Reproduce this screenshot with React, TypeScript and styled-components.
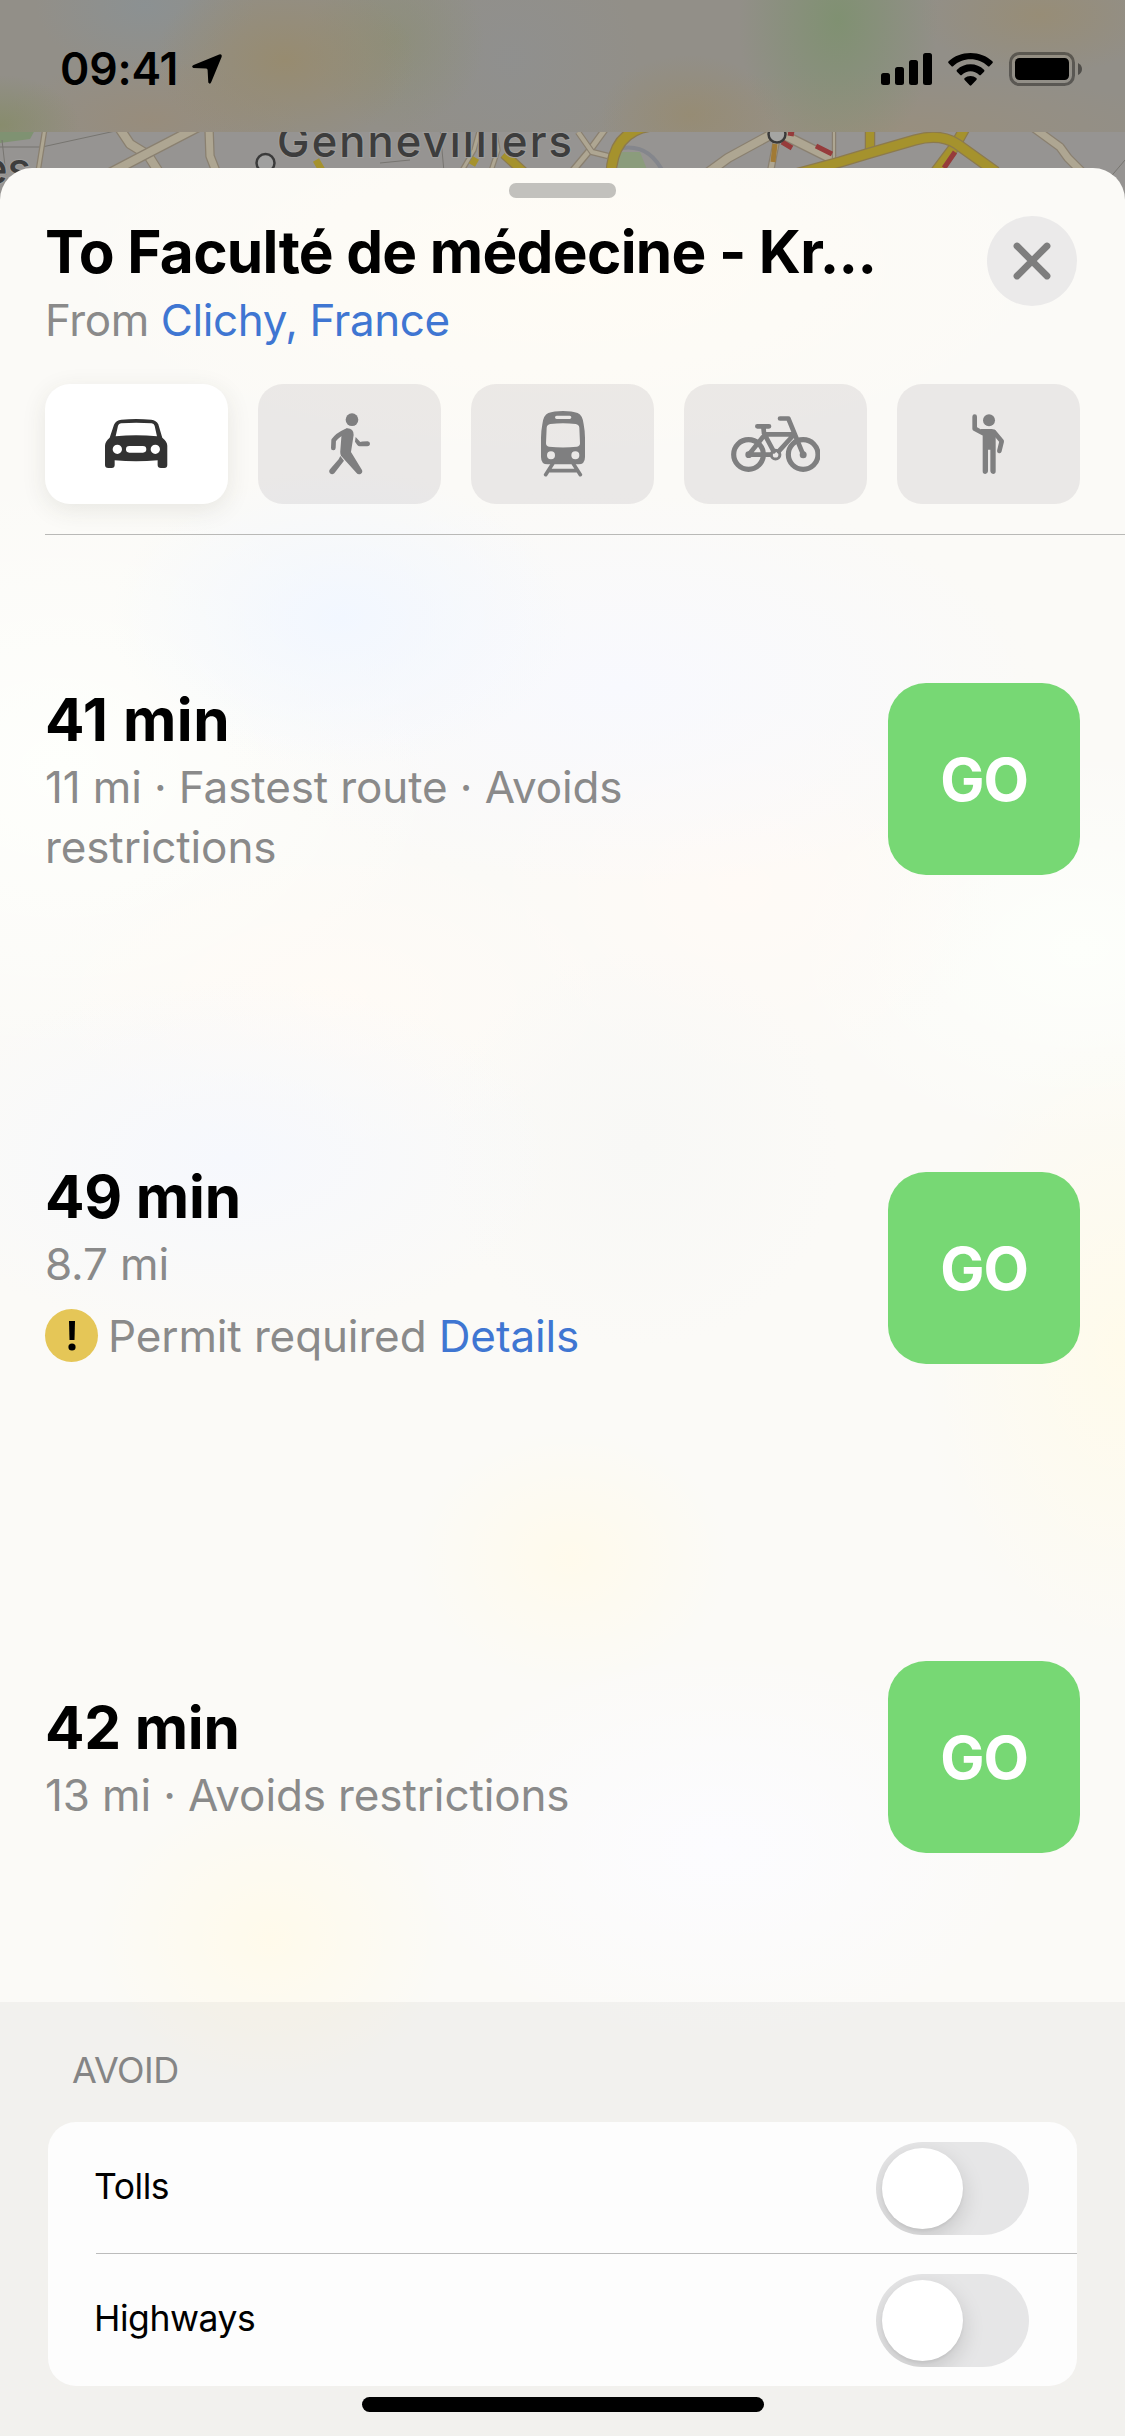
import React, { useState } from "react";
import styled, { createGlobalStyle, css } from "styled-components";

const GlobalStyle = createGlobalStyle`
  * { box-sizing: border-box; }
  html, body { margin: 0; padding: 0; }
  body { font-family: Inter, "Liberation Sans", sans-serif; -webkit-font-smoothing: antialiased; }
  button { font-family: inherit; border: 0; padding: 0; cursor: pointer; }
`;

const Screen = styled.main`
  position: relative;
  width: 1125px;
  height: 2436px;
  overflow: hidden;
  display: flex;
  flex-direction: column;
  background: #969492;
  color: #000;
`;

const MapLayer = styled.svg`
  position: absolute;
  inset: 0 0 auto 0;
  width: 1125px;
  height: 220px;
`;

const StatusBar = styled.header`
  position: relative;
  flex: none;
  height: 132px;
  padding: 6px 43px 0 60px;
  display: flex;
  align-items: center;
  justify-content: space-between;
  background:
    radial-gradient(ellipse 100px 140px at 838px 20px, #7b916ccc, #7b916c00),
    radial-gradient(ellipse 130px 90px at 285px 60px, #998a67bb, #998a6700),
    radial-gradient(ellipse 110px 70px at 145px 5px, #87929999, #87929900),
    radial-gradient(ellipse 80px 50px at 0px 125px, #858b66cc, #858b6600),
    radial-gradient(ellipse 90px 60px at 690px 115px, #978a6caa, #978a6c00),
    radial-gradient(ellipse 120px 60px at 1040px 15px, #998c70bb, #998c7000),
    radial-gradient(ellipse 90px 90px at 395px 40px, #8b8e75aa, #8b8e7500),
    radial-gradient(ellipse 150px 60px at 150px 120px, #998c79cc, #998c7900),
    radial-gradient(ellipse 300px 60px at 880px 130px, #9a8f7ccc, #9a8f7c00),
    radial-gradient(ellipse 130px 130px at 510px 60px, #8f9090cc, #8f909000),
    #928f88;
`;

const StatusGroup = styled.div<{ $gap: number }>`
  display: flex;
  align-items: center;
  gap: ${(p) => p.$gap}px;
`;

const Clock = styled.span`
  font-size: 44.5px;
  line-height: 54px;
  font-weight: 600;
  letter-spacing: -0.2px;
`;

const Icon = styled.svg`
  display: block;
  flex: none;
`;

const Sheet = styled.section`
  position: relative;
  flex: 1;
  margin-top: 36px;
  border-radius: 32px 32px 0 0;
  overflow: hidden;
  display: flex;
  flex-direction: column;
  background:
    radial-gradient(ellipse 230px 150px at 340px 450px, #f2f7ff, #f2f7ff00),
    radial-gradient(ellipse 420px 200px at 620px 520px, #f8f9fe, #f8f9fe00),
    radial-gradient(ellipse 330px 180px at 230px 990px, #f6f8fd, #f6f8fd00),
    radial-gradient(ellipse 200px 200px at 640px 980px, #f8f8f6, #f8f8f600),
    radial-gradient(ellipse 260px 200px at 740px 720px, #fffaf6, #fffaf600),
    radial-gradient(ellipse 300px 160px at 330px 830px, #fffbf6, #fffbf600),
    radial-gradient(ellipse 200px 320px at 1120px 1180px, #fffbeb, #fffbeb00),
    radial-gradient(ellipse 160px 130px at 570px 1390px, #fffaec, #fffaec00),
    radial-gradient(ellipse 180px 150px at 270px 1770px, #fffaeb, #fffaeb00),
    radial-gradient(ellipse 320px 200px at 720px 1680px, #fcfcff, #fcfcff00),
    radial-gradient(ellipse 520px 200px at 560px 100px, #fffcf5, #fffcf500),
    radial-gradient(ellipse 400px 300px at 60px 600px, #fefffc, #fefffc00),
    radial-gradient(ellipse 300px 200px at 1080px 780px, #fdfffb, #fdfffb00),
    #fbfaf7;
`;

const Grabber = styled.div`
  align-self: center;
  flex: none;
  width: 107px;
  height: 15px;
  margin-top: 15px;
  border-radius: 7px;
  background: #c2c1bd;
`;

const SheetHeader = styled.div`
  height: 186px;
  padding: 18px 48px 0 45px;
  display: flex;
  justify-content: space-between;
  align-items: flex-start;
`;

const Heading = styled.div`
  white-space: nowrap;
`;

const Title = styled.h1`
  margin: 0;
  font-size: 58.5px;
  line-height: 72px;
  font-weight: 700;
  letter-spacing: -0.68px;
`;

const Muted = styled.p`
  margin: 0;
  font-size: 44px;
  line-height: 60px;
  letter-spacing: -0.12px;
  color: #8a8a8a;
`;

const Origin = styled(Muted)`
  margin-top: 2px;
  letter-spacing: -0.4px;
`;

const Link = styled.a`
  color: #3f76d2;
`;

const CloseButton = styled.button`
  width: 90px;
  height: 90px;
  border-radius: 50%;
  background: #ebeaea;
  display: grid;
  place-items: center;
`;

const Modes = styled.nav`
  flex: none;
  display: grid;
  grid-template-columns: repeat(5, 183px);
  gap: 30px;
  height: 120px;
  padding-left: 45px;
`;

const ModeButton = styled.button<{ $active: boolean }>`
  height: 120px;
  border-radius: 25px;
  display: grid;
  place-items: center;
  color: #7f7f80;
  background: rgba(120, 116, 124, 0.13);
  ${(p) =>
    p.$active &&
    css`
      color: #323232;
      background: #fff;
      box-shadow: 0 6px 24px rgba(60, 60, 40, 0.1);
    `}
`;

const Rule = styled.hr`
  flex: none;
  margin: 30px 0 0 45px;
  border: 0;
  height: 1px;
  background: #b9b9b7;
`;

const Routes = styled.ul`
  flex: none;
  margin: 0;
  padding: 0;
  list-style: none;
`;

const Route = styled.li`
  height: 489px;
  padding: 0 45px 1px;
  display: flex;
  align-items: center;
  justify-content: space-between;
`;

const RouteText = styled.div`
  width: 640px;
`;

const Duration = styled.h2<{ $tracking: number }>`
  margin: 0;
  font-size: 58.5px;
  line-height: 75px;
  font-weight: 700;
  letter-spacing: ${(p) => p.$tracking}px;
`;

const Notice = styled.div`
  display: flex;
  align-items: center;
  gap: 10px;
  height: 60px;
  margin: 12px 0;
`;

const WarningBadge = styled.span`
  width: 53px;
  height: 53px;
  border-radius: 50%;
  background: #e5c657;
  display: grid;
  place-items: center;
`;

const GoButton = styled.button`
  width: 192px;
  height: 192px;
  border-radius: 38px;
  background: #77d874;
  color: #fff;
  font-size: 59px;
  font-weight: 700;
  letter-spacing: -1.2px;
`;

const AvoidSection = styled.section`
  flex: 1;
  padding: 45px 48px 0;
  background: rgba(128, 128, 134, 0.07);
`;

const AvoidTitle = styled.h3`
  margin: 0 0 29px 24px;
  font-size: 36px;
  line-height: 46px;
  font-weight: 400;
  letter-spacing: -0.5px;
  color: #858585;
`;

const Card = styled.div`
  height: 264px;
  border-radius: 28px;
  background: #fdfdfd;
  padding-left: 48px;
`;

const SettingRow = styled.label`
  height: 131px;
  padding: 1px 48px 0 0;
  display: flex;
  align-items: center;
  justify-content: space-between;
  & + & {
    height: 133px;
    padding-top: 0;
    border-top: 1px solid #bcbcbc;
  }
`;

const SettingName = styled.span`
  margin-left: -2px;
  padding-bottom: 3px;
  font-size: 35.5px;
  letter-spacing: -0.45px;
`;

const Switch = styled.button<{ $on: boolean }>`
  width: 153px;
  height: 93px;
  border-radius: 47px;
  padding: 6px;
  overflow: hidden;
  display: flex;
  justify-content: ${(p) => (p.$on ? "flex-end" : "flex-start")};
  background: ${(p) => (p.$on ? "#77d874" : "#e6e6e7")};
`;

const Knob = styled.span`
  width: 81px;
  height: 81px;
  border-radius: 50%;
  background: #fff;
  box-shadow: 0 8px 22px rgba(0, 0, 0, 0.15), 0 2px 3px rgba(0, 0, 0, 0.05);
`;

const HomeIndicator = styled.div`
  position: absolute;
  left: 362px;
  bottom: 24px;
  width: 402px;
  height: 15px;
  border-radius: 8px;
  background: #000;
`;

const MapRoad = ({ d, w, fill, edge }: { d: string; w: number; fill: string; edge: string }) => (
  <g fill="none" strokeLinejoin="round">
    <path d={d} stroke={edge} strokeWidth={w + 2.5} />
    <path d={d} stroke={fill} strokeWidth={w} />
  </g>
);

const minorRoads = [
  { d: "M45 128L38 172", w: 3 },
  { d: "M118 126L130 144L148 155L160 174", w: 8 },
  { d: "M200 126L148 153L108 174", w: 8 },
  { d: "M209 128L210 156L217 174", w: 7 },
  { d: "M460 174L474 150L480 128", w: 3 },
  { d: "M490 174L498 150L494 128", w: 3 },
  { d: "M570 174L590 150L606 128", w: 5 },
  { d: "M578 132L592 152L608 156", w: 4 },
  { d: "M772 134L728 158L706 174", w: 8 },
  { d: "M777 138L770 174", w: 5 },
  { d: "M782 134L834 160", w: 8 },
  { d: "M834 128L834 158", w: 2 },
  { d: "M1034 128L1060 147L1068 158L1086 176", w: 7 },
];

const mainRoads = [
  { d: "M650 126Q612 132 611 176", w: 9 },
  { d: "M870 126L870 156", w: 8 },
  { d: "M966 126L955 146L934 174", w: 9 },
  { d: "M792 175L840 162L870 153L915 140Q940 133 957 144L996 172", w: 9 },
  { d: "M504 154L528 176", w: 8 },
];

const MapBackdrop = () => (
  <MapLayer viewBox="0 0 1125 220">
    <path d="M0 130H35L30 139L0 143Z" fill="#7f9272" />
    <path d="M618 152H640L648 172H618Z" fill="#8b9c7c" />
    <path d="M0 147H42L120 130M1125 160L1108 180M2 140L6 175M440 128L444 172M380 163L410 160" stroke="#777570" strokeWidth="1" fill="none" />
    <path d="M622 148Q650 144 664 174" stroke="#84868c" strokeWidth="4" fill="none" />
    {minorRoads.map((r) => <MapRoad key={r.d} {...r} fill="#aea692" edge="#8a8070" />)}
    {mainRoads.map((r) => <MapRoad key={r.d} {...r} fill="#a5922d" edge="#8c7a4d" />)}
    <path d="M316 160L323 172M472 165L476 158" stroke="#a5922d" strokeWidth="7" />
    <path d="M775 144L773 162" stroke="#a17a35" strokeWidth="5" />
    <path d="M782 142L792 148M816 146L832 154M788 133L794 134M955 152L944 168" stroke="#963b3b" strokeWidth="5" />
    <circle cx="777" cy="134" r="8.5" fill="#a5a5a3" stroke="#3a3a3a" strokeWidth="2.5" />
    <circle cx="265.500" cy="163" r="9" fill="#a0a09f" stroke="#3a3a3a" strokeWidth="2.500" />
    <g fontFamily='Inter, "Liberation Sans", sans-serif' fontWeight="500" fontSize="43.500" fill="#3d3d3d" stroke="#a09f9d" strokeWidth="2" paintOrder="stroke">
      <text x="277" y="157" textLength="295">Gennevilliers</text>
      <text x="-18" y="184">es</text>
    </g>
  </MapLayer>
);

const LocationArrow = () => (
  <Icon width="30" height="30" viewBox="0 0 30 30">
    <path d="M27.200 .4Q30.400-.4 29.600 3L19.300 28Q18 31 16.300 28.500L15.600 16Q15.500 14.600 14.200 14.500L1.400 14Q-1.200 12.400 1.600 11Z" />
  </Icon>
);

const Signal = () => (
  <Icon width="51" height="32" viewBox="0 0 51 32">
    <rect x="0" y="20" width="9" height="12" rx="2.500" />
    <rect x="14" y="14" width="9" height="18" rx="2.500" />
    <rect x="28" y="7" width="9" height="25" rx="2.500" />
    <rect x="42" y="0" width="9" height="32" rx="2.500" />
  </Icon>
);

const Wifi = () => (
  <Icon width="45" height="33" viewBox="0 0 135 99">
    <path d="M67.500 0C93 0 116 9 133 25Q136 28 133 31L125 39Q122 42 119 39C105 26 87 19 67.500 19S30 26 16 39Q13 42 10 39L2 31Q-1 28 2 25C19 9 42 0 67.500 0Z" />
    <path d="M67.500 34C83 34 97 40 108 50Q111 53 108 56L99 65Q96 68 93 65C86 59 77 55 67.500 55S49 59 42 65Q39 68 36 65L27 56Q24 53 27 50C38 40 52 34 67.500 34Z" />
    <path d="M67.500 69Q78 69 85 75Q88 78 85 81L70 97Q67.500 99 65 97L50 81Q47 78 50 75Q57 69 67.500 69Z" />
  </Icon>
);

const Battery = () => (
  <Icon width="73" height="34" viewBox="0 0 73 34">
    <rect x="1.500" y="1.500" width="63" height="31" rx="9" fill="none" stroke="#000" strokeOpacity=".38" strokeWidth="3" />
    <rect x="6" y="6" width="54" height="22" rx="4.500" />
    <path d="M69 11Q73 13 73 17T69 23Z" fillOpacity=".45" />
  </Icon>
);

const CloseIcon = () => (
  <Icon width="38" height="38" viewBox="0 0 38 38">
    <path d="M4 4L34 34M34 4L4 34" stroke="#7e7e7e" strokeWidth="6.800" strokeLinecap="round" />
  </Icon>
);

const CarIcon = () => (
  <Icon width="62.300" height="49.300" viewBox="0 0 187 148">
    <path fill="currentColor" fillRule="evenodd" d="M49 2Q93-2 139 2Q154 4 160 16L172 56Q187 68 187 80V138Q187 147 178 147H168Q158 147 158 138V124Q93 130 29 124V138Q29 147 20 147H10Q0 147 0 138V80Q0 68 14 56L27 17Q33 4 49 2ZM48 13Q93 10 140 13Q147 14 149 20L156 52Q93 46 32 52L39 20Q41 14 48 13ZM37 77a14 14 0 1 0 0 28a14 14 0 1 0 0-28ZM151 77a14 14 0 1 0 0 28a14 14 0 1 0 0-28ZM73 81a10 10 0 0 0 0 20H114a10 10 0 0 0 0-20Z" />
  </Icon>
);

const WalkIcon = () => (
  <Icon width="41.300" height="61.700" viewBox="0 0 124 185" fill="none" stroke="currentColor" strokeLinejoin="round" strokeLinecap="round">
    <circle cx="69" cy="20" r="19" fill="currentColor" stroke="none" />
    <path d="M53 46Q74 45 74 66L66 117L99 171Q102 178 96 182Q88 187 82 179L36 128Q33 122 34 113L38 60Z" fill="currentColor" stroke="none" />
    <path d="M51 54Q24 66 14 82L13 105" strokeWidth="14" />
    <path d="M34 129L45 143L16 181Q9 187 3 181Q-2 175 3 169L29 139Z" fill="currentColor" stroke="none" />
    <path d="M80 72L94 87Q96 85 116 85Q124 86 123 94Q122 100 115 100H92Q88 100 85 96L78 86Z" fill="currentColor" stroke="none" />
  </Icon>
);

const TrainIcon = () => (
  <Icon width="44" height="65.700" viewBox="0 0 132 197">
    <path fill="currentColor" fillRule="evenodd" d="M4 40Q7 12 22 6Q38 0 66 0T110 6Q125 12 128 40Q132 62 132 80V138Q132 160 112 160H20Q0 160 0 138V80Q0 62 4 40ZM47 14a5 5 0 0 0 0 10H86a5 5 0 0 0 0-10ZM28 39Q18 41 17 50L15 97Q15 106 24 107Q66 112 108 107Q117 106 117 97L115 50Q114 41 104 39Q66 35 28 39ZM30 121a12 12 0 1 0 0 24a12 12 0 1 0 0-24ZM103 121a12 12 0 1 0 0 24a12 12 0 1 0 0-24Z" />
    <path d="M35 158L14 191M97 158L118 191M27 179H105" stroke="currentColor" strokeWidth="11" strokeLinecap="round" />
  </Icon>
);

const BikeIcon = () => (
  <Icon width="89.700" height="56" viewBox="0 0 269 168" fill="none" stroke="currentColor" strokeWidth="14" strokeLinecap="round" strokeLinejoin="round">
    <circle cx="52.500" cy="115.500" r="44.500" strokeWidth="15.500" />
    <circle cx="216.500" cy="115.500" r="44.500" strokeWidth="15.500" />
    <circle cx="53" cy="116" r="10" fill="currentColor" stroke="none" />
    <circle cx="216.500" cy="116" r="10.500" fill="currentColor" stroke="none" />
    <circle cx="133.600" cy="116" r="13" strokeWidth="9" />
    <path d="M53 116H118M79 31H114M97 32L99 52L128 106M95 64L53 116M100 55H187M185 60L143 106M147 7.500H172L216.500 116" />
  </Icon>
);

const HailIcon = () => (
  <Icon width="32.700" height="60" viewBox="0 0 98 180" fill="none" stroke="currentColor" strokeWidth="14" strokeLinecap="round" strokeLinejoin="round">
    <circle cx="51" cy="19" r="18" fill="currentColor" stroke="none" />
    <path d="M8 8V44L32 57M66 54L89 82L82 111" />
    <path d="M26 45H60Q68 46 72 52L71 75V172Q71 180 63 180Q56 180 55 172V107H48V172Q47 180 40 180Q32 180 32 172V64Z" fill="currentColor" stroke="none" />
  </Icon>
);

const modes = [
  { name: "Drive", Glyph: CarIcon },
  { name: "Walk", Glyph: WalkIcon },
  { name: "Transit", Glyph: TrainIcon },
  { name: "Cycle", Glyph: BikeIcon },
  { name: "Ride", Glyph: HailIcon },
];

const routes = [
  { time: "41 min", tracking: 0.5, detail: "11 mi · Fastest route · Avoids restrictions" },
  { time: "49 min", tracking: -0.2, detail: "8.7 mi", notice: "Permit required" },
  { time: "42 min", tracking: -0.2, detail: "13 mi · Avoids restrictions" },
];

export default function App() {
  const [mode, setMode] = useState("Drive");
  const [avoid, setAvoid] = useState<Record<string, boolean>>({ Tolls: false, Highways: false });

  return (
    <Screen>
      <GlobalStyle />
      <MapBackdrop />
      <StatusBar>
        <StatusGroup $gap={14}>
          <Clock>09:41</Clock>
          <LocationArrow />
        </StatusGroup>
        <StatusGroup $gap={16}>
          <Signal />
          <Wifi />
          <Battery />
        </StatusGroup>
      </StatusBar>
      <Sheet>
        <Grabber />
        <SheetHeader>
          <Heading>
            <Title>To Faculté de médecine - Kr...</Title>
            <Origin>
              From <Link>Clichy, France</Link>
            </Origin>
          </Heading>
          <CloseButton>
            <CloseIcon />
          </CloseButton>
        </SheetHeader>
        <Modes>
          {modes.map(({ name, Glyph }) => (
            <ModeButton key={name} $active={mode === name} onClick={() => setMode(name)}>
              <Glyph />
            </ModeButton>
          ))}
        </Modes>
        <Rule />
        <Routes>
          {routes.map((r) => (
            <Route key={r.time}>
              <RouteText>
                <Duration $tracking={r.tracking}>{r.time}</Duration>
                <Muted>{r.detail}</Muted>
                {r.notice && (
                  <Notice>
                    <WarningBadge>
                      <Icon width="10" height="30" viewBox="0 0 10 30">
                        <path d="M2 0H8L7.500 19H2.500Z" />
                        <circle cx="5" cy="26" r="3.600" />
                      </Icon>
                    </WarningBadge>
                    <Muted>
                      {r.notice} <Link>Details</Link>
                    </Muted>
                  </Notice>
                )}
              </RouteText>
              <GoButton>GO</GoButton>
            </Route>
          ))}
        </Routes>
        <AvoidSection>
          <AvoidTitle>AVOID</AvoidTitle>
          <Card>
            {Object.keys(avoid).map((name) => (
              <SettingRow key={name}>
                <SettingName>{name}</SettingName>
                <Switch $on={avoid[name]} onClick={() => setAvoid({ ...avoid, [name]: !avoid[name] })}>
                  <Knob />
                </Switch>
              </SettingRow>
            ))}
          </Card>
        </AvoidSection>
      </Sheet>
      <HomeIndicator />
    </Screen>
  );
}
